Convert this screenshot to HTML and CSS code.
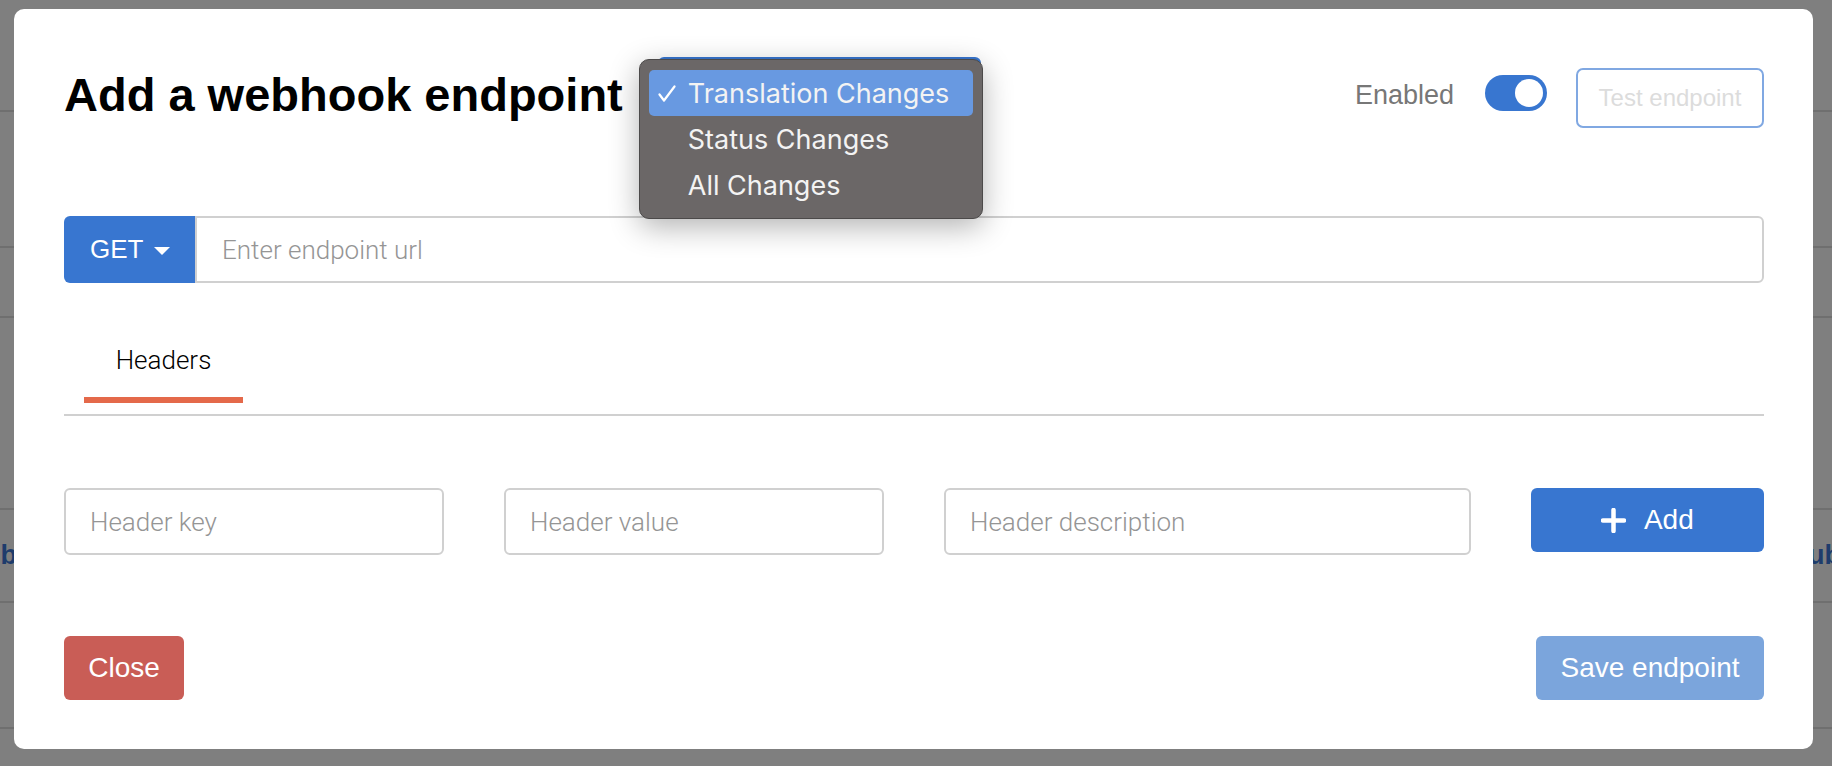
FILE: index.html
```html
<!DOCTYPE html>
<html lang="en">
<head>
    <meta charset="UTF-8">
    <meta name="viewport" content="width=device-width, initial-scale=1.0">
    <title>Add a webhook endpoint</title>
    <link rel="stylesheet" href="styles.css">
</head>
<body>

    <!-- Page behind the modal -->
    <div class="page">
        <div class="row r1"></div>
        <div class="row r2"></div>
        <div class="row r3"></div>
        <div class="row r4"></div>
        <div class="row r5">
            <a class="link link-left">Sub</a>
            <a class="link link-right">Sub</a>
        </div>
        <div class="row r6"></div>
    </div>
    <div class="backdrop"></div>

    <!-- Modal -->
    <div class="modal">
        <div class="modal-header">
            <h2>Add a webhook endpoint</h2>

            <div class="select-wrap">
                <div class="select"></div>
                <ul class="select-menu">
                    <li class="selected">
                        <svg class="check" width="18" height="18" viewBox="0 0 18 18"><polyline points="1.5,9.5 6,15.5 16.5,1.5" fill="none" stroke="#fff" stroke-width="2.2" stroke-linecap="round" stroke-linejoin="round"/></svg>
                        Translation Changes
                    </li>
                    <li>Status Changes</li>
                    <li>All Changes</li>
                </ul>
            </div>

            <div class="header-right">
                <span class="enabled-label">Enabled</span>
                <span class="toggle"><span class="knob"></span></span>
                <button class="btn-outline">Test endpoint</button>
            </div>
        </div>

        <div class="url-row">
            <button class="method">GET <span class="caret"></span></button>
            <input type="text" class="url-input" placeholder="Enter endpoint url">
        </div>

        <div class="tabs">
            <div class="tab active">Headers</div>
        </div>

        <div class="header-row">
            <input type="text" class="field span3" placeholder="Header key">
            <input type="text" class="field span3" placeholder="Header value">
            <input type="text" class="field span4" placeholder="Header description">
            <button class="btn add">
                <svg width="25" height="25" viewBox="0 0 25 25"><path d="M12.5 2v21M2 12.5h21" stroke="#fff" stroke-width="4.5" stroke-linecap="round"/></svg>
                Add
            </button>
        </div>

        <div class="modal-footer">
            <button class="btn close">Close</button>
            <button class="btn save">Save endpoint</button>
        </div>
    </div>

</body>
</html>
```

FILE: styles.css
```css
body {
    margin: 0;
    padding: 0;
    height: 100vh;
    overflow: hidden;
    background: #fff;
    font-family: "Liberation Sans", Arial, sans-serif;
}

/* page under the overlay */
.row {
    border-bottom: 2px solid #dedede;
    display: flex;
    align-items: center;
    justify-content: space-between;
}
.r1 { height: 110px; }
.r2 { height: 134px; }
.r3 { height: 68px; }
.r4 { height: 190px; }
.r5 { height: 91px; }
.r6 { height: 124px; }
.link {
    font-size: 27px;
    font-weight: bold;
    color: #3c78d8;
}
.link-left {
    margin-left: -34px;
}
.link-right {
    margin-right: -9px;
}
.backdrop {
    position: fixed;
    top: 0;
    left: 0;
    right: 0;
    bottom: 0;
    background: rgba(0, 0, 0, 0.5);
}

/* modal */
.modal {
    position: fixed;
    top: 9px;
    left: 14px;
    width: 1799px;
    height: 740px;
    box-sizing: border-box;
    padding: 59px 49px 49px 50px;
    background: #fff;
    border-radius: 10px;
    display: flex;
    flex-direction: column;
}
.modal-header {
    display: flex;
    align-items: center;
    height: 60px;
}
h2 {
    margin: 3px 0 0;
    align-self: flex-start;
    font-size: 47px;
    line-height: 47px;
    font-weight: bold;
    color: #000;
}

/* native select with its open popup */
.select-wrap {
    position: relative;
    align-self: flex-start;
    margin-top: -11px;
    margin-left: 35px;
    width: 323px;
    height: 60px;
}
.select {
    height: 100%;
    background: #3876d0;
    border-radius: 6px;
}
.select-menu {
    position: absolute;
    left: -19px;
    top: 2px;
    width: 344px;
    box-sizing: border-box;
    margin: 0;
    padding: 10px 9px;
    list-style: none;
    background: #6b6767;
    border: 1px solid #4c4a4a;
    border-radius: 10px;
    box-shadow: 0 8px 30px rgba(0, 0, 0, 0.3);
}
.select-menu li {
    position: relative;
    height: 46px;
    display: flex;
    align-items: center;
    padding-left: 39px;
    border-radius: 5px;
    font-family: Inter, "Liberation Sans", sans-serif;
    font-size: 27px;
    color: #f3f3f3;
}
.select-menu li.selected {
    background: #6899e1;
}
.check {
    position: absolute;
    left: 9px;
    top: 15px;
}

.header-right {
    margin-left: auto;
    display: flex;
    align-items: center;
}
.enabled-label {
    font-size: 27px;
    color: #777;
    margin-bottom: 6px;
}
.toggle {
    display: flex;
    justify-content: flex-end;
    align-items: center;
    box-sizing: border-box;
    width: 62px;
    height: 36px;
    padding: 4px;
    margin-left: 31px;
    margin-bottom: 10px;
    border-radius: 18px;
    background: #3876d0;
}
.knob {
    width: 28px;
    height: 28px;
    border-radius: 50%;
    background: #fff;
}
.btn-outline {
    margin-left: 29px;
    width: 188px;
    height: 60px;
    background: #fff;
    border: 2px solid #80a8e2;
    border-radius: 7px;
    color: #dcdcdc;
    font-family: "Liberation Sans", Arial, sans-serif;
    font-size: 24px;
}

/* url row */
.url-row {
    margin-top: 88px;
    display: flex;
    height: 67px;
}
.method {
    display: flex;
    align-items: center;
    width: 131px;
    padding: 0 0 0 26px;
    border: none;
    border-radius: 6px 0 0 6px;
    background: #3876d0;
    color: #fff;
    font-family: "Liberation Sans", Arial, sans-serif;
    font-size: 26px;
}
.caret {
    margin-left: 11px;
    margin-top: 3px;
    border-left: 8px solid transparent;
    border-right: 8px solid transparent;
    border-top: 8px solid #fff;
}
.url-input, .field {
    box-sizing: border-box;
    border: 2px solid #d0d0d0;
    font-family: Roboto, "Liberation Sans", sans-serif;
    font-weight: 300;
    font-size: 26px;
    color: #333;
    outline: none;
}
.url-input {
    flex: 1;
    height: 67px;
    padding-left: 25px;
    border-radius: 0 6px 6px 0;
}
.url-input::placeholder, .field::placeholder {
    color: #959595;
}

/* tabs */
.tabs {
    margin-top: 62px;
    padding-left: 20px;
    border-bottom: 2px solid #d0d0d0;
    display: flex;
}
.tab {
    width: 159px;
    text-align: center;
    font-family: Roboto, "Liberation Sans", sans-serif;
    font-weight: 300;
    font-size: 26px;
    line-height: 30px;
    color: #000;
    padding-bottom: 22px;
    margin-bottom: 11px;
}
.tab.active {
    border-bottom: 6px solid #e4694a;
}

/* header inputs */
.header-row {
    margin-top: 72px;
    display: grid;
    grid-template-columns: repeat(12, 1fr);
    column-gap: 60px;
    align-items: start;
}
.field {
    height: 67px;
    padding-left: 24px;
    border-radius: 6px;
    min-width: 0;
}
.span3 { grid-column: span 3; }
.span4 { grid-column: span 4; }

.btn {
    height: 64px;
    border: none;
    border-radius: 6px;
    color: #fff;
    font-family: "Liberation Sans", Arial, sans-serif;
    font-size: 28px;
    cursor: pointer;
}
.add {
    grid-column: span 2;
    display: flex;
    align-items: center;
    justify-content: center;
    gap: 18px;
    background: #3876d0;
}

/* footer */
.modal-footer {
    margin-top: auto;
    display: flex;
    justify-content: space-between;
}
.close {
    width: 120px;
    background: #c95d56;
}
.save {
    width: 228px;
    background: #7ba5dc;
}
```
